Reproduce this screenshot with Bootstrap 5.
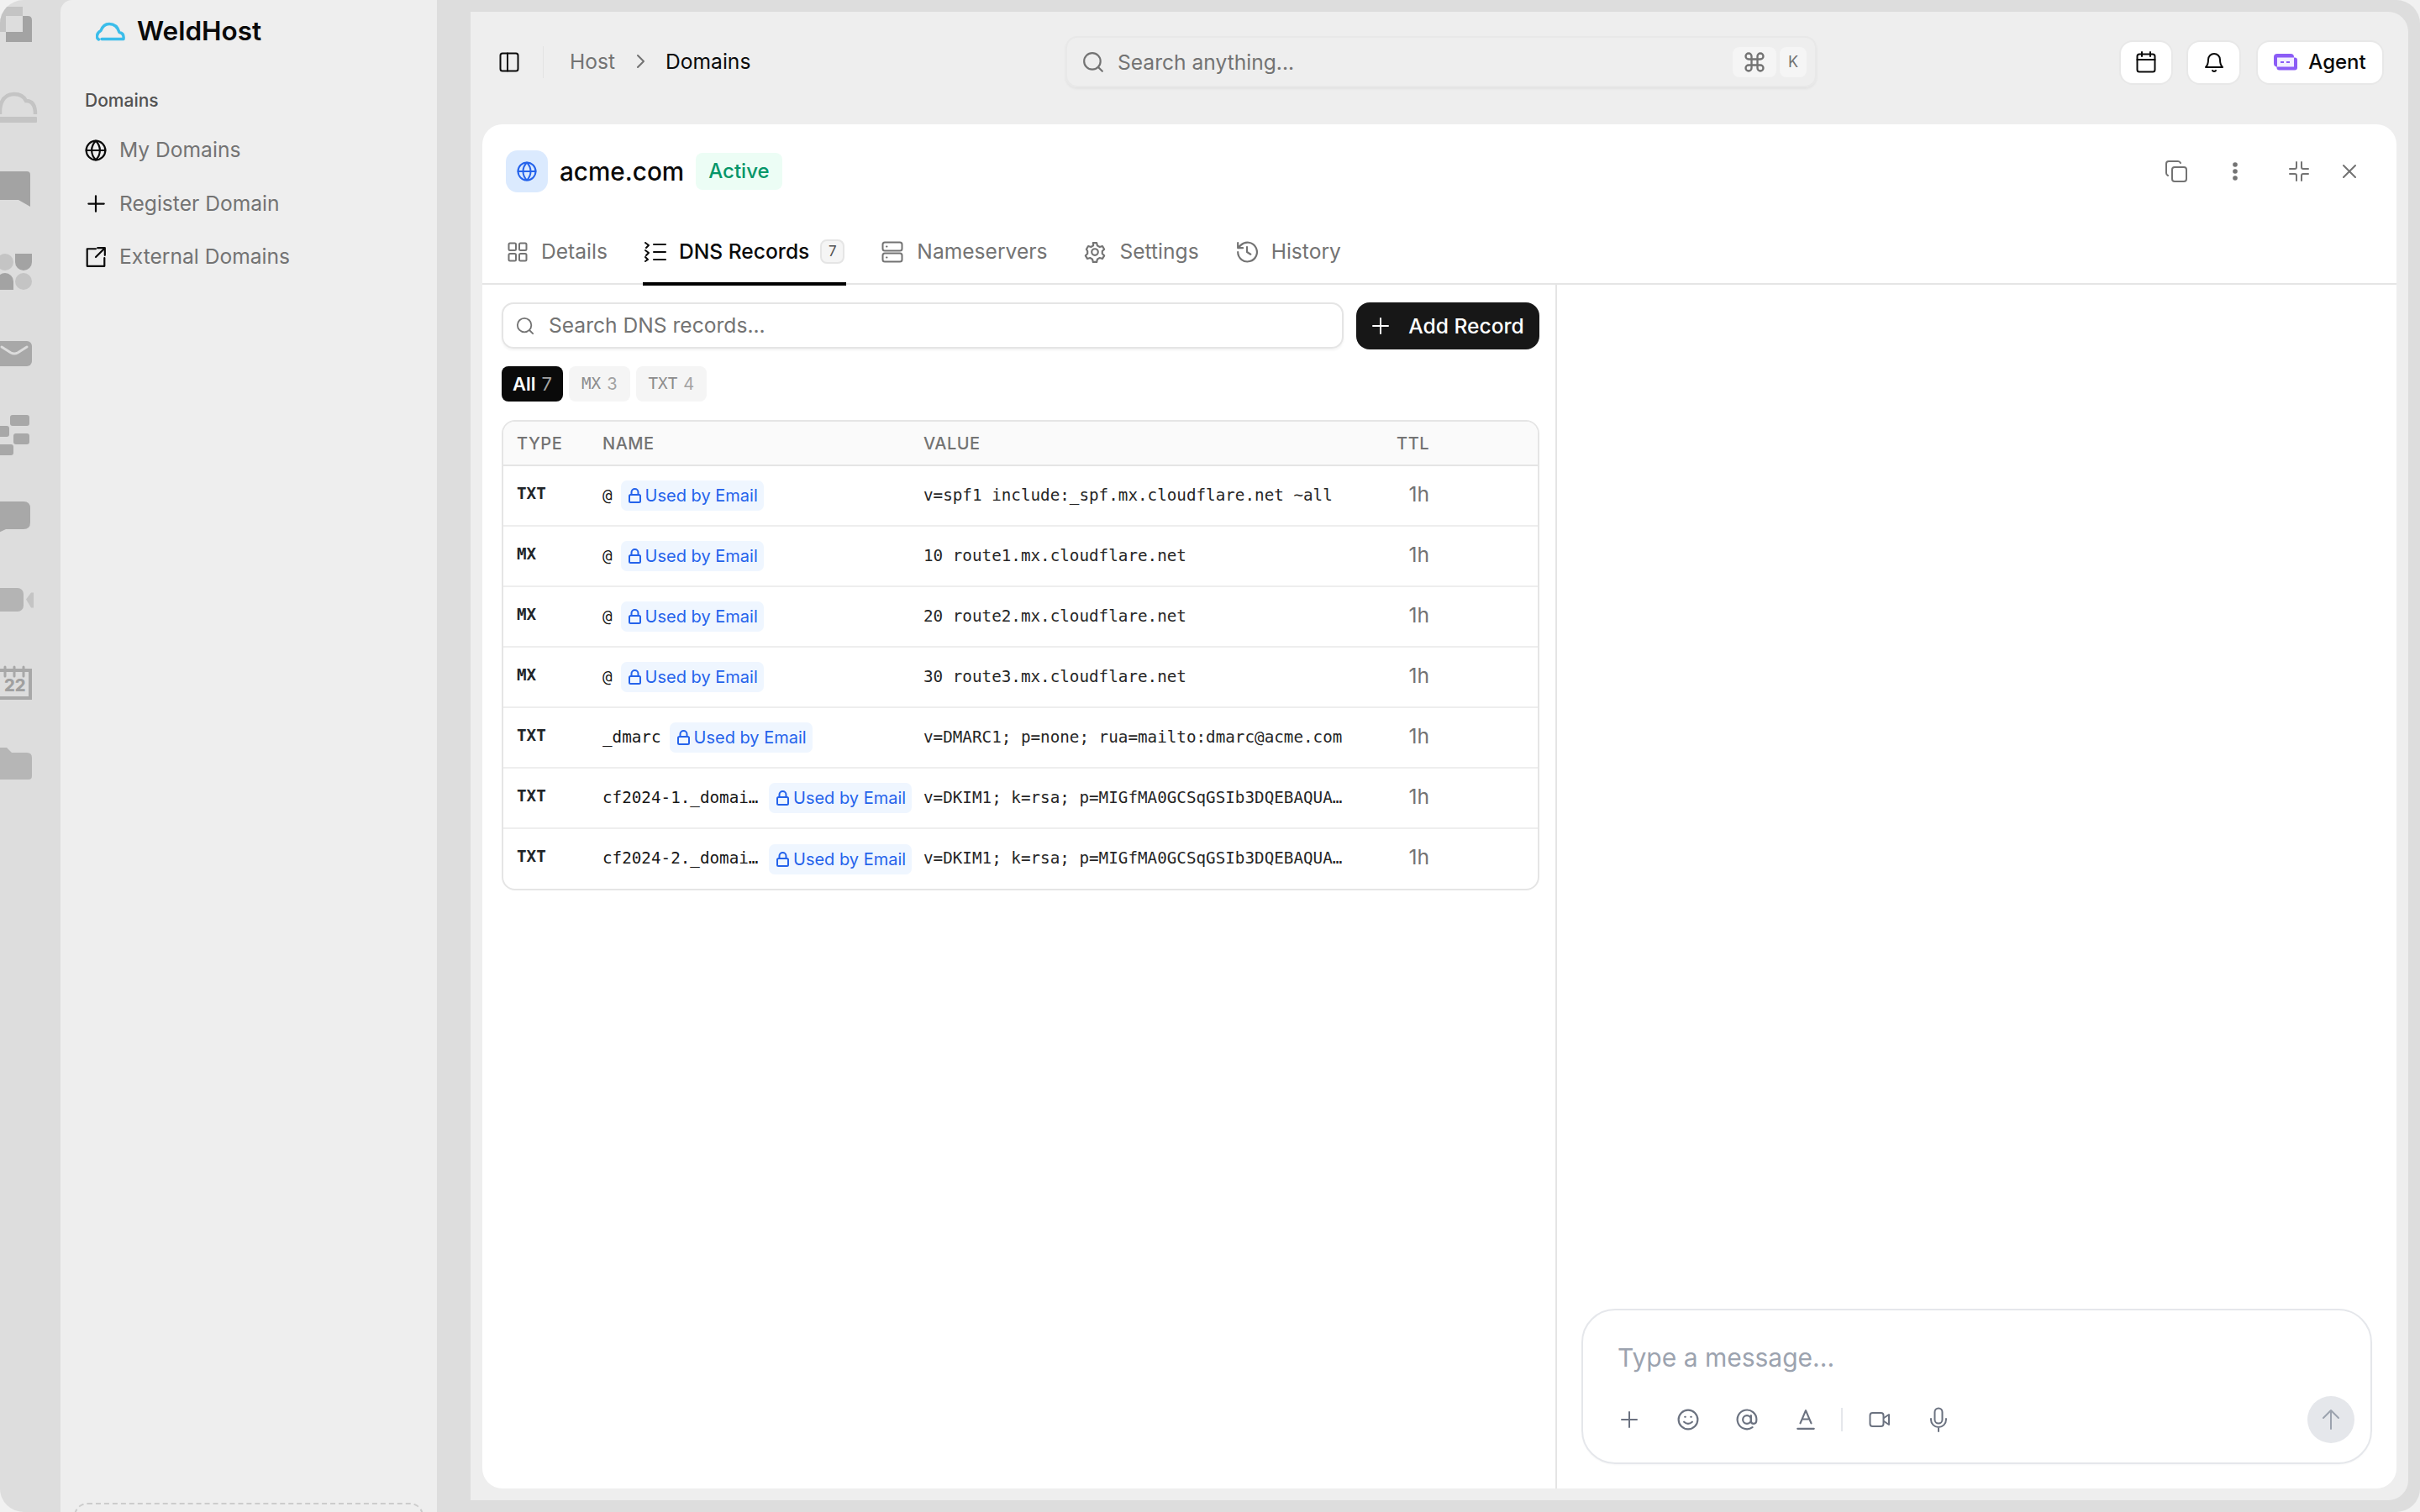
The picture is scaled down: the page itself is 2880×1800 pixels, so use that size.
<!DOCTYPE html>
<html lang="en">
<head>
  <meta charset="UTF-8">
  <title>WeldHost - Domains</title>
  <link href="https://cdn.jsdelivr.net/npm/bootstrap@5.3.0/dist/css/bootstrap.min.css" rel="stylesheet">
  <style>
    html, body { height: 100%; }
    body { background: #f1f1f1; font-family: Inter, "Liberation Sans", sans-serif; color: #0a0a0a; overflow: hidden; }
    svg { display: block; flex: none; }
    .stroke-icon { fill: none; stroke: currentColor; stroke-width: 2; stroke-linecap: round; stroke-linejoin: round; }

    .app-shell { height: 1800px; width: 2880px; background: #dddddd; border-radius: 28px; overflow: hidden; }

    .dock { width: 72px; padding-top: 8px; gap: 49.6px; overflow: hidden; }
    .dock svg { margin-left: -10px; overflow: visible; }
    .dock text { font-family: Inter, sans-serif; font-weight: 800; font-size: 20px; fill: #a0a0a0; }

    .side-panel { width: 448px; background: #eeeeee; border-radius: 14px 0 0 0; padding: 0 16px; }
    .brand { height: 74px; padding-left: 26px; gap: 13px; font-size: 31.5px; font-weight: 600; }
    .side-title { margin: 33px 0 0 13px; font-size: 21px; font-weight: 500; color: #525252; line-height: 26px; }
    .side-list { margin-top: 14px; }
    .side-link { height: 63.5px; margin-left: 13px; gap: 15px; font-size: 24.6px; color: #737373; text-decoration: none; }
    .side-link svg { color: #0a0a0a; }
    .dashed-box { height: 60px; margin-bottom: -49px; border: 2px dashed #cccccc; border-radius: 16px; }

    .main-wrap { flex: 1; margin: 14px 14px 14px 40px; background: #eeeeee; border-radius: 0 24px 24px 0; padding: 0 14px 14px; min-width: 0; }
    .top-bar { height: 134px; }
    .toggle-zone { width: 73px; height: 38px; margin: -15px 31px 0 0; padding-left: 20px; border-right: 1px solid #e3e3e3; }
    .crumbs { width: 590px; font-size: 24.6px; gap: 24.5px; color: #737373; margin-top: -15px; }
    .crumbs b { font-weight: 400; color: #0a0a0a; }
    .global-search { width: 894px; height: 61px; margin-top: -15px; border: 2px solid #e8e8e8; border-radius: 14px; box-shadow: 0 2px 3px rgba(0,0,0,.05); padding: 0 10px 0 18px; gap: 16px; color: #737373; font-size: 24.6px; }
    .search-label { position: relative; top: 1px; }
    .kbd-key { height: 36px; border-radius: 8px; background: #f5f5f5; font-size: 18px; color: #737373; }
    .kbd-cmd { width: 52px; margin-left: auto; }
    .kbd-letter { width: 32px; margin-left: -12px; }
    .top-actions { margin-left: auto; margin-right: 15px; margin-top: -14px; }
    .top-btn { height: 53px; background: #fff; border: 2px solid #e8e8e8; border-radius: 16px; }
    .btn-cal { width: 64px; margin-right: 16px; }
    .btn-bell { width: 65px; margin-right: 18px; }
    .btn-agent { width: 152px; gap: 13px; font-size: 24px; font-weight: 500; }

    .work-card { flex: 1; background: #fff; border-radius: 24px; min-height: 0; }
    .card-head { height: 112px; padding: 0 48px 0 28px; }
    .globe-box { width: 50px; height: 50px; background: #dbeafe; color: #2563eb; border-radius: 14px; }
    .domain-name { font-size: 29.7px; font-weight: 500; margin: 0 14px; }
    .active-tag { height: 44px; padding: 0 15px; background: #ecfdf5; color: #059669; border-radius: 8px; font-size: 24px; font-weight: 500; }
    .head-tools { margin-left: auto; color: #737373; }
    .tool-dots { margin: 0 60px 0 53px; }
    .tool-close { margin-left: 40px; }

    .tab-row { height: 79px; border-bottom: 2px solid #e5e5e5; padding-left: 28px; gap: 40px; }
    .tab-item { height: 80px; margin-bottom: -3px; padding: 3px 2px 0; gap: 16px; font-size: 24.6px; color: #737373; border-bottom: 4px solid transparent; }
    .tab-item.is-on { color: #0a0a0a; border-bottom-color: #000; font-weight: 500; gap: 15px; }
    .tab-count { width: 29px; height: 29px; border-radius: 8px; background: #f5f5f5; border: 2px solid #e5e5e5; font-size: 17px; font-weight: 400; color: #525252; margin-left: -2px; }

    .record-pane { width: 1279px; border-right: 2px solid #e5e5e5; padding: 21px 19px 0 23px; }
    .record-tools { gap: 15px; }
    .record-search { flex: 1; height: 55px; border: 2px solid #e5e5e5; border-radius: 14px; box-shadow: 0 2px 3px rgba(0,0,0,.05); padding: 0 15px; gap: 17px; color: #737373; font-size: 24.6px; }
    .add-btn { width: 218px; height: 56px; background: #171717; color: #fff; border-radius: 16px; border: 0; gap: 22px; font-size: 24.6px; font-weight: 500; padding: 0; }
    .pill-row { gap: 7px; margin-top: 20px; }
    .type-pill { height: 42px; padding: 0 15px; border-radius: 8px; background: #f5f5f5; color: #8c8c8c; font-family: "DejaVu Sans Mono", monospace; font-size: 19.25px; gap: 7px; }
    .type-pill i { font-family: Inter, sans-serif; font-style: normal; font-size: 20px; color: #a3a3a3; }
    .type-pill.is-on { background: #0a0a0a; color: #a3a3a3; font-family: Inter, sans-serif; font-size: 22px; padding: 0 13px; }
    .type-pill.is-on b { color: #fff; font-weight: 600; }

    .record-frame { margin-top: 22px; border: 2px solid #e5e5e5; border-radius: 16px; overflow: hidden; }
    .record-table { margin: 0; table-layout: fixed; width: 100%; --bs-table-border-color: #eeeeee; }
    .record-table th { height: 52px; padding: 0 0 0 16px; background: #fafafa; font-size: 20px; font-weight: 500; letter-spacing: .5px; color: #737373; border-bottom: 2px solid #e5e5e5; vertical-align: middle; }
    .record-table td { height: 72px; padding: 0 0 0 16px; vertical-align: middle; border-bottom: 2px solid #eeeeee; }
    .record-table tr:last-child td { border-bottom: 0; }
    .record-table th.value-col, .record-table td.value-col { padding-left: 14px; }
    .record-table th.ttl-head, .record-table td.ttl-cell { padding: 0 20px 0 0; }
    .record-type { font-family: "DejaVu Sans Mono", monospace; font-size: 19.25px; font-weight: 700; position: relative; top: -2px; }
    .name-cell { gap: 10px; font-family: "DejaVu Sans Mono", monospace; font-size: 19.25px; color: #171717; }
    .name-text { overflow: hidden; text-overflow: ellipsis; white-space: nowrap; min-width: 0; }
    .email-tag { flex: none; width: 170px; height: 36px; padding-left: 9px; gap: 5px; background: #eff6ff; color: #2563eb; border-radius: 7px; font-family: Inter, sans-serif; font-size: 20px; white-space: nowrap; }
    .value-text { max-width: 500px; font-family: "DejaVu Sans Mono", monospace; font-size: 19.25px; color: #262626; overflow: hidden; text-overflow: ellipsis; white-space: nowrap; }
    .record-table td.ttl-cell { font-size: 24.6px; color: #737373; }
    .ttl-text { position: relative; top: -2px; }

    .chat-pane { flex: 1; padding: 0 29px 29px; min-width: 0; }
    .composer { height: 185px; margin-top: auto; border: 2px solid #e5e7eb; border-radius: 40px; padding: 38px 19px 0 41px; box-shadow: 0 1px 2px rgba(0,0,0,.03); }
    .composer-hint { font-size: 30px; color: #9ca3af; line-height: 36px; }
    .composer-tools { margin: 28px 0 0 1px; color: #6b7280; gap: 44px; }
    .tool-sep { width: 2px; height: 28px; background: #e5e7eb; margin: 0 -13px 0 -15px; }
    .send-btn { width: 56px; height: 56px; background: #e5e7eb; border-radius: 50%; color: #9ca3af; margin-left: auto; }
  </style>
</head>
<body>
  <div class="app-shell d-flex">
    <div class="dock d-flex flex-column">
      <svg width="48" height="48" viewBox="0 0 48 48"><path d="M37 11h6q5 0 5 5v26H17V30h20z" fill="#a3a3a3"/><path d="M4 0h33v11H17v19H4q-4 0-4-4V4q0-4 4-4z" fill="#c4c4c4"/></svg>
      <svg width="48" height="48" viewBox="0 0 48 48" fill="none"><path d="M10 30V24Q12 6 27 6q10 0 14 8 11 0 11 16" stroke="#c4c4c4" stroke-width="4.500"/><rect x="0" y="33" width="54" height="7" rx="1" fill="#c4c4c4"/></svg>
      <svg width="48" height="48" viewBox="0 0 48 48"><path d="M8 1h34q4 0 4 4v38L32 35H8q-8 0-8-8V9q0-8 8-8z" fill="#a3a3a3"/></svg>
      <svg width="48" height="48" viewBox="0 0 48 48"><g transform="translate(0,-1)"><circle cx="16" cy="12" r="10" fill="#c4c4c4"/><path d="M28 2h20v10a10 10 0 0 1-20 0z" fill="#a3a3a3"/><path d="M6 45V35a10 10 0 0 1 20 0v10z" fill="#a3a3a3"/><circle cx="38" cy="35" r="10" fill="#c4c4c4"/></g></svg>
      <svg width="48" height="48" viewBox="0 0 48 48"><rect x="0" y="8" width="48" height="30" rx="6" fill="#a8a8a8"/><path d="M12 15l11 7q4 2 8 0l11-7" stroke="#dcdcdc" stroke-width="3" fill="none" stroke-linecap="round"/></svg>
      <svg width="48" height="48" viewBox="0 0 48 48"><g fill="#a8a8a8"><rect x="22" y="-2" width="23" height="13" rx="3"/><rect x="0" y="11" width="21" height="13" rx="3"/><rect x="26" y="20" width="19" height="13" rx="3"/><rect x="0" y="33" width="26" height="13" rx="3"/></g></svg>
      <svg width="48" height="48" viewBox="0 0 48 48"><path d="M8 3h30q8 0 8 8v17q0 8-8 8H17L4 42V36q-4-2-4-9V11q0-8 8-8z" fill="#a8a8a8"/></svg>
      <svg width="48" height="48" viewBox="0 0 48 48"><rect x="0" y="9" width="38" height="28" rx="7" fill="#b4b4b4"/><path d="M41 22.500l6-8h3v18h-3z" fill="#c4c4c4"/></svg>
      <svg width="48" height="48" viewBox="0 0 48 48" fill="none"><rect x="2" y="9" width="44" height="33" stroke="#a8a8a8" stroke-width="4"/><path d="M16 5v11M27 5v11M38 5v11" stroke="#a8a8a8" stroke-width="3" stroke-linecap="round"/><text x="15" y="34" stroke="none">22</text></svg>
      <svg width="48" height="48" viewBox="0 0 48 48"><path d="M4 4h14l6 6h18q6 0 6 6v22q0 4-4 4H4q-4 0-4-4V8z" fill="#b6b6b6"/></svg>
    </div>

    <div class="side-panel d-flex flex-column">
      <div class="brand d-flex align-items-center">
        <svg width="36" height="24" viewBox="0 0 36 24" fill="none" stroke="#3bbdea" stroke-width="3.4" stroke-linecap="round" stroke-linejoin="round"><path d="M7 21.5H33M33 21.500q1-7-5-8-3-10-12-10-7 0-10 8-4 2-4.500 6-.5 3 2 4.500"/></svg>
        <span>WeldHost</span>
      </div>
      <div class="side-title">Domains</div>
      <div class="side-list d-flex flex-column">
        <a href="#" class="side-link d-flex align-items-center">
          <svg class="stroke-icon" width="26" height="26" viewBox="0 0 24 24"><circle cx="12" cy="12" r="10.500"/><path d="M1.500 12h21M12 1.500c-6 6-6 15 0 21M12 1.500c6 6 6 15 0 21"/></svg>
          My Domains
        </a>
        <a href="#" class="side-link d-flex align-items-center">
          <svg class="stroke-icon" width="26" height="26" viewBox="0 0 24 24"><path d="M12 4v17M4 12.500h17"/></svg>
          Register Domain
        </a>
        <a href="#" class="side-link d-flex align-items-center">
          <svg class="stroke-icon" width="26" height="26" viewBox="0 0 24 24"><path d="M12 3H2.500v19h19v-9M14 2h8v8M22 2l-10 10"/></svg>
          External Domains
        </a>
      </div>
      <div class="dashed-box mt-auto"></div>
    </div>

    <div class="main-wrap d-flex flex-column">
      <div class="top-bar d-flex align-items-center">
        <div class="toggle-zone d-flex align-items-center">
          <svg class="stroke-icon" width="24" height="24" viewBox="0 0 24 24"><rect x="1.500" y="1.500" width="21" height="21" rx="2.500"/><path d="M10 1.500v21"/></svg>
        </div>
        <div class="crumbs d-flex align-items-center">
          <span>Host</span>
          <svg class="stroke-icon" width="11" height="18" viewBox="0 0 11 18"><path d="M2 2l7 7-7 7"/></svg>
          <b>Domains</b>
        </div>
        <div class="global-search d-flex align-items-center">
          <svg class="stroke-icon" width="26" height="26" viewBox="0 0 24 24"><circle cx="11" cy="11" r="9"/><path d="M18 18l4 4"/></svg>
          <span class="search-label">Search anything...</span>
          <span class="kbd-key kbd-cmd d-flex align-items-center justify-content-center">
            <svg class="stroke-icon" width="28" height="28" viewBox="0 0 24 24" stroke-width="1.500"><path d="M15 6v12a3 3 0 1 0 3-3H6a3 3 0 1 0 3 3V6a3 3 0 1 0-3 3h12a3 3 0 1 0-3-3"/></svg>
          </span>
          <span class="kbd-key kbd-letter d-flex align-items-center justify-content-center">K</span>
        </div>
        <div class="top-actions d-flex">
          <div class="top-btn btn-cal d-flex align-items-center justify-content-center">
            <svg class="stroke-icon" width="24" height="26" viewBox="0 0 24 26"><rect x="1.500" y="3.500" width="21" height="21" rx="2.500"/><path d="M1.500 10h21M7 1v5M17 1v5"/></svg>
          </div>
          <div class="top-btn btn-bell d-flex align-items-center justify-content-center">
            <svg class="stroke-icon" width="24" height="26" viewBox="0 0 24 26"><path d="M2 19c2-2 3-4 3-9a7 7 0 0 1 14 0c0 5 1 7 3 9zM10 23q2 2 4 0"/></svg>
          </div>
          <div class="top-btn btn-agent d-flex align-items-center justify-content-center">
            <svg width="28" height="20" viewBox="0 0 28 20"><rect x="0" y="0" width="24" height="15.500" rx="4" fill="#8b5cf6"/><rect x="3.500" y="4.500" width="24.500" height="15" rx="3" fill="#8b5cf6"/><rect x="4" y="4.500" width="20" height="11" fill="#f3efff"/><path d="M8 10h4M15 10h4" stroke="#8b5cf6" stroke-width="2"/></svg>
            <span>Agent</span>
          </div>
        </div>
      </div>

      <div class="work-card d-flex flex-column">
        <div class="card-head d-flex align-items-center">
          <div class="globe-box d-flex align-items-center justify-content-center">
            <svg class="stroke-icon" width="24" height="24" viewBox="0 0 24 24"><circle cx="12" cy="12" r="10.500"/><path d="M1.500 12h21M12 1.500c-6 6-6 15 0 21M12 1.500c6 6 6 15 0 21"/></svg>
          </div>
          <span class="domain-name">acme.com</span>
          <span class="active-tag d-flex align-items-center">Active</span>
          <div class="head-tools d-flex align-items-center">
            <svg class="stroke-icon" width="26" height="26" viewBox="0 0 26 26"><rect x="8" y="8" width="17" height="17" rx="3"/><path d="M3 18q-2-1-2-3V4q0-3 3-3h11q2 0 3 2"/></svg>
            <svg class="tool-dots" width="8" height="24" viewBox="0 0 8 24" fill="currentColor"><circle cx="4" cy="4" r="2.800"/><circle cx="4" cy="12" r="2.800"/><circle cx="4" cy="20" r="2.800"/></svg>
            <svg class="stroke-icon" width="24" height="24" viewBox="0 0 24 24"><path d="M9 1v6q0 2-2 2H1M15 1v6q0 2 2 2h6M9 23v-6q0-2-2-2H1M15 23v-6q0-2 2-2h6"/></svg>
            <svg class="stroke-icon tool-close" width="16" height="16" viewBox="0 0 16 16"><path d="M1 1l14 14M15 1L1 15"/></svg>
          </div>
        </div>

        <div class="tab-row d-flex">
          <div class="tab-item d-flex align-items-center">
            <svg class="stroke-icon" width="24" height="24" viewBox="0 0 24 24"><rect x="1.500" y="1.500" width="8.500" height="8.500" rx="1.500"/><rect x="14" y="1.500" width="8.500" height="8.500" rx="1.500"/><rect x="1.500" y="14" width="8.500" height="8.500" rx="1.500"/><rect x="14" y="14" width="8.500" height="8.500" rx="1.500"/></svg>
            Details
          </div>
          <div class="tab-item is-on d-flex align-items-center">
            <svg class="stroke-icon" width="26" height="24" viewBox="0 0 26 24"><path d="M11 3h14M11 12h14M11 21h14M1 1l4 3-3 3M1 10l4 3-3 3M1 18l3 3-3 2"/></svg>
            DNS Records
            <span class="tab-count d-flex align-items-center justify-content-center">7</span>
          </div>
          <div class="tab-item d-flex align-items-center">
            <svg class="stroke-icon" width="26" height="26" viewBox="0 0 26 26"><rect x="1.500" y="1.500" width="23" height="10" rx="2.500"/><rect x="1.500" y="14.500" width="23" height="10" rx="2.500"/><path d="M6 6.500h.5M6 19.500h.5"/></svg>
            Nameservers
          </div>
          <div class="tab-item d-flex align-items-center">
            <svg class="stroke-icon" width="26" height="26" viewBox="0 0 24 24"><circle cx="12" cy="12" r="3.500"/><path d="M10 2h4l.7 3 2.600 1.500 3-.9 2 3.400-2.200 2.100v2.800l2.200 2.100-2 3.400-3-.9-2.600 1.500-.7 3h-4l-.7-3-2.600-1.500-3 .9-2-3.400 2.200-2.100v-2.800L2.700 9l2-3.400 3 .9L10.300 5z"/></svg>
            Settings
          </div>
          <div class="tab-item d-flex align-items-center">
            <svg class="stroke-icon" width="26" height="26" viewBox="0 0 24 24"><path d="M2 12a10.500 10.500 0 1 0 3.200-7.500L2 7.500M2 2v5.500h5.500M12 6.500V12l4 2.500"/></svg>
            History
          </div>
        </div>

        <div class="d-flex flex-fill" style="min-height:0">
          <div class="record-pane">
            <div class="record-tools d-flex">
              <div class="record-search d-flex align-items-center">
                <svg class="stroke-icon" width="22" height="22" viewBox="0 0 24 24"><circle cx="11" cy="11" r="9"/><path d="M18 18l4 4"/></svg>
                Search DNS records...
              </div>
              <button class="add-btn btn d-flex align-items-center justify-content-center">
                <svg class="stroke-icon" width="22" height="22" viewBox="0 0 22 22"><path d="M11 2v18M2 11h18"/></svg>
                Add Record
              </button>
            </div>
            <div class="pill-row d-flex">
              <span class="type-pill is-on d-flex align-items-center"><b>All</b> 7</span>
              <span class="type-pill d-flex align-items-center">MX <i>3</i></span>
              <span class="type-pill d-flex align-items-center">TXT <i>4</i></span>
            </div>
            <div class="record-frame">
              <table class="table record-table" id="recordTable">
                <colgroup><col style="width:102px"><col style="width:384px"><col style="width:562px"><col style="width:74px"><col></colgroup>
                <thead>
                  <tr><th>TYPE</th><th>NAME</th><th class="value-col">VALUE</th><th class="ttl-head text-end">TTL</th><th></th></tr>
                </thead>
                <tbody></tbody>
              </table>
            </div>
          </div>

          <div class="chat-pane d-flex flex-column">
            <div class="composer">
              <div class="composer-hint">Type a message...</div>
              <div class="composer-tools d-flex align-items-center">
                <svg class="stroke-icon" width="26" height="26" viewBox="0 0 26 26"><path d="M13 4v18M4 13h18"/></svg>
                <svg class="stroke-icon" width="26" height="26" viewBox="0 0 24 24"><circle cx="12" cy="12" r="10.500"/><path d="M7.500 14.500q4.500 4 9 0M8.500 9h.5M15 9h.5"/></svg>
                <svg class="stroke-icon" width="26" height="26" viewBox="0 0 24 24"><circle cx="12" cy="12" r="4.500"/><path d="M16.500 7.500v6q0 3 3 3t3-4.500a10.500 10.500 0 1 0-4.500 8.500"/></svg>
                <svg class="stroke-icon" width="26" height="26" viewBox="0 0 24 24"><path d="M6 16L12 2l6 14M8 11.500h8M3 22h18"/></svg>
                <span class="tool-sep"></span>
                <svg class="stroke-icon" width="26" height="26" viewBox="0 0 26 26"><rect x="1.500" y="5" width="16" height="16" rx="3"/><path d="M18 11l6-4v12l-6-4"/></svg>
                <svg class="stroke-icon" width="26" height="30" viewBox="0 0 26 30"><rect x="8.500" y="1.500" width="9" height="18" rx="4.500"/><path d="M4 14v1a9 9 0 0 0 18 0v-1M13 24v5"/></svg>
                <div class="send-btn d-flex align-items-center justify-content-center">
                  <svg class="stroke-icon" width="24" height="26" viewBox="0 0 24 26"><path d="M12 24V2M3 11l9-9 9 9"/></svg>
                </div>
              </div>
            </div>
          </div>
        </div>
      </div>
    </div>
  </div>

  <script src="https://cdn.jsdelivr.net/npm/bootstrap@5.3.0/dist/js/bootstrap.bundle.min.js"></script>
  <script>
    const records = [
      ['TXT', '@', 'v=spf1 include:_spf.mx.cloudflare.net ~all'],
      ['MX', '@', '10 route1.mx.cloudflare.net'],
      ['MX', '@', '20 route2.mx.cloudflare.net'],
      ['MX', '@', '30 route3.mx.cloudflare.net'],
      ['TXT', '_dmarc', 'v=DMARC1; p=none; rua=mailto:dmarc@acme.com'],
      ['TXT', 'cf2024-1._domainkey', 'v=DKIM1; k=rsa; p=MIGfMA0GCSqGSIb3DQEBAQUAA4GNADCB'],
      ['TXT', 'cf2024-2._domainkey', 'v=DKIM1; k=rsa; p=MIGfMA0GCSqGSIb3DQEBAQUAA4GNADCB']
    ];
    const lock = '<svg class="stroke-icon" width="15" height="18" viewBox="0 0 15 18"><rect x="1" y="8" width="13" height="9" rx="1.500"/><path d="M3.500 8V5a4 4 0 0 1 8 0v3"/></svg>';
    document.querySelector('#recordTable tbody').innerHTML = records.map(r => `
      <tr>
        <td><span class="record-type">${r[0]}</span></td>
        <td>
          <div class="name-cell d-flex align-items-center">
            <span class="name-text">${r[1]}</span>
            <span class="email-tag d-flex align-items-center">${lock}Used by Email</span>
          </div>
        </td>
        <td class="value-col"><div class="value-text">${r[2]}</div></td>
        <td class="ttl-cell text-end"><span class="ttl-text">1h</span></td>
        <td></td>
      </tr>
    `).join('');
  </script>
</body>
</html>
